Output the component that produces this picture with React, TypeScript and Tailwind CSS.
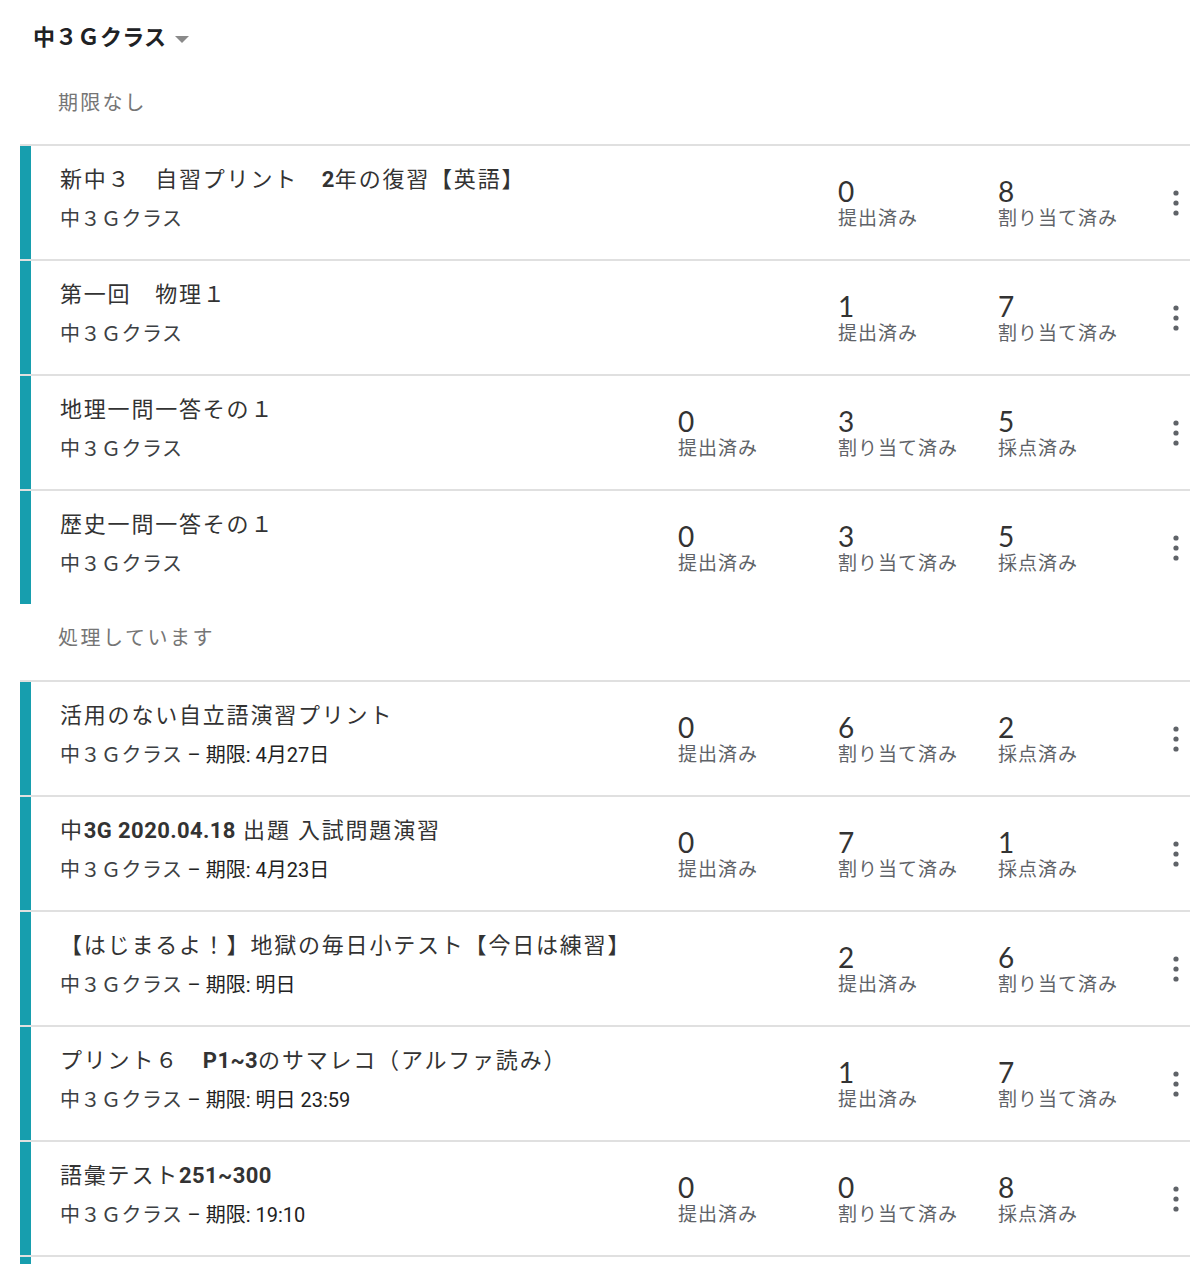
import React from 'react';

type Stat = { value: number; label: string };
type Item = { title: string; due?: string; stats: Stat[] };

const font = { fontFamily: "Roboto, 'Noto Sans CJK JP', sans-serif" };

const s = (v: number): Stat => ({ value: v, label: '提出済み' });
const a = (v: number): Stat => ({ value: v, label: '割り当て済み' });
const g = (v: number): Stat => ({ value: v, label: '採点済み' });

const noDue: Item[] = [
  { title: '新中３　自習プリント　2年の復習【英語】', stats: [s(0), a(8)] },
  { title: '第一回　物理１', stats: [s(1), a(7)] },
  { title: '地理一問一答その１', stats: [s(0), a(3), g(5)] },
  { title: '歴史一問一答その１', stats: [s(0), a(3), g(5)] },
];

const working: Item[] = [
  { title: '活用のない自立語演習プリント', due: '4月27日', stats: [s(0), a(6), g(2)] },
  { title: '中3G 2020.04.18 出題 入試問題演習', due: '4月23日', stats: [s(0), a(7), g(1)] },
  { title: '【はじまるよ！】地獄の毎日小テスト【今日は練習】', due: '明日', stats: [s(2), a(6)] },
  { title: 'プリント６　P1~3のサマレコ（アルファ読み）', due: '明日 23:59', stats: [s(1), a(7)] },
  { title: '語彙テスト251~300', due: '19:10', stats: [s(0), a(0), g(8)] },
];

// latin runs in titles render bold next to the kana/kanji
function Rich({ text }: { text: string }) {
  const parts = text.split(/([!-~]+(?: [!-~]+)*)/);
  return (
    <>
      {parts.map((p, i) =>
        i % 2 === 1 ? <span key={i} className="font-bold tracking-[0.4px]">{p}</span> : <span key={i}>{p}</span>
      )}
    </>
  );
}

function MoreIcon() {
  return (
    <svg width="10" height="30" viewBox="0 0 10 30" className="text-[#5f6368]">
      <circle cx="5" cy="5" r="2.6" fill="currentColor" />
      <circle cx="5" cy="15" r="2.6" fill="currentColor" />
      <circle cx="5" cy="25" r="2.6" fill="currentColor" />
    </svg>
  );
}

function Row({ item }: { item: Item }) {
  return (
    <div className="border-t-2 border-[#e0e0e0] flex h-[115px]">
      <div className="w-[11px] bg-[#179eae] shrink-0" />
      <div className="flex-1 flex min-w-0">
        <div className="flex-1 pl-[29px] pt-[18px] min-w-0">
          <div className="text-[22px] leading-[32px] tracking-[1.8px] text-[#333] whitespace-nowrap">
            <Rich text={item.title} />
          </div>
          <div className="text-[20px] leading-[28px] mt-[9px] text-[#3c4043] whitespace-nowrap">
            <span className="tracking-[0.5px]">中３Ｇクラス</span>
            {item.due && <span className="text-[#222]">{` – 期限: ${item.due}`}</span>}
          </div>
        </div>
        <div className="flex">
          {item.stats.map((st, i) => (
            <div key={i} className="w-[160px] pt-[31px]">
              <div className="text-[28px] leading-[28px] text-[#333]" style={{ fontFamily: 'Lato, sans-serif' }}>
                {st.value}
              </div>
              <div className="text-[19px] leading-[24px] mt-[2px] tracking-[1px] text-[#5f6368]">{st.label}</div>
            </div>
          ))}
        </div>
        <div className="w-[32px] flex items-center justify-center pl-[3px]">
          <MoreIcon />
        </div>
      </div>
    </div>
  );
}

export default function App() {
  return (
    <div className="w-[1190px] bg-white overflow-hidden" style={font}>
      <div className="pt-[23px] pl-[33px] flex items-center h-[53px]">
        <span className="text-[22px] leading-[30px] font-bold text-[#202124] tracking-[0.3px]">中３Ｇクラス</span>
        <svg width="14" height="8" viewBox="0 0 14 8" className="ml-[9px] mt-[3px]">
          <path d="M0 0 L14 0 L7 7 Z" fill="#8a8a8a" />
        </svg>
      </div>

      <div className="mt-[36px] mb-[27px] pl-[58px] text-[20px] leading-[28px] tracking-[2.2px] text-[#757575]">期限なし</div>
      <div className="ml-[20px]">
        {noDue.map((it, i) => (
          <Row key={i} item={it} />
        ))}
      </div>

      <div className="mt-[20px] mb-[28px] pl-[58px] text-[20px] leading-[28px] tracking-[2.5px] text-[#757575]">処理しています</div>
      <div className="ml-[20px]">
        {working.map((it, i) => (
          <Row key={i} item={it} />
        ))}
        <div className="border-t-2 border-[#e0e0e0] h-[9px]">
          <div className="w-[11px] h-full bg-[#179eae]" />
        </div>
      </div>
    </div>
  );
}
